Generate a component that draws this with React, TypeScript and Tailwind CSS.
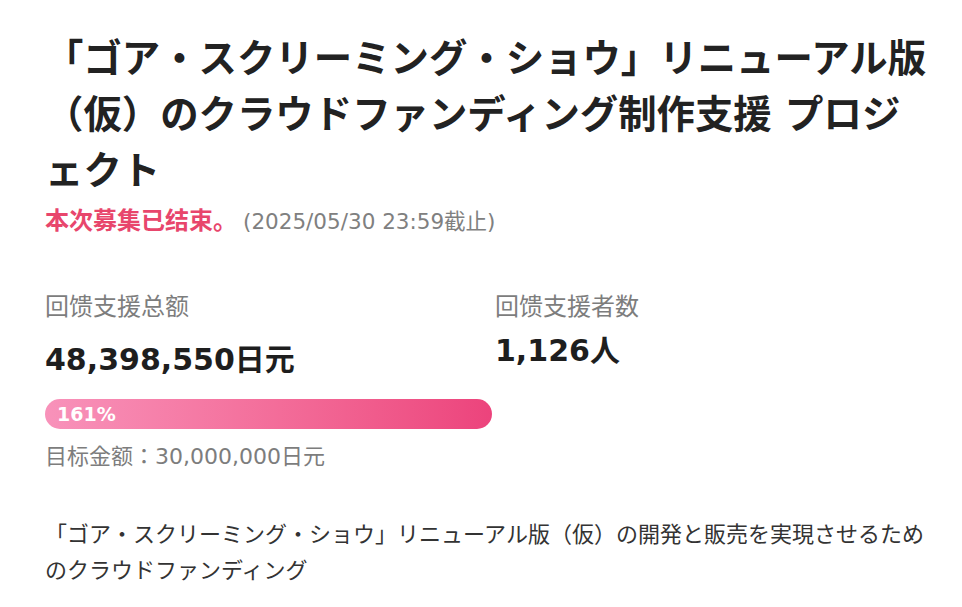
const font = '[font-family:"DejaVu_Sans","Noto_Sans_CJK_JP","Noto_Sans_CJK_SC",sans-serif]'

function Stat({ label, value, children }: { label: string; value: string; children?: React.ReactNode }) {
  return (
    <div className="flex flex-col">
      <div className="text-[24px] leading-[32px] text-[#7d7d7d]">{label}</div>
      {children ? (
        <div className="mt-[17px] text-[30px] font-bold leading-[40px] text-[#1e1e1e]">{value}</div>
      ) : (
        <div className="mt-[8px] text-[30px] font-bold leading-[40px] text-[#1e1e1e]">{value}</div>
      )}
      {children}
    </div>
  )
}

export default function App() {
  return (
    <div className={`min-h-[607px] w-[962px] bg-white pl-[45px] pr-[27px] pt-[31px] ${font}`}>
      {/* Title */}
      <h1 className="text-[38.4px] font-bold leading-[56px] text-[#222] [line-break:normal]">
        「ゴア・スクリーミング・ショウ」リニューアル版（仮）のクラウドファンディング制作支援 プロジェクト
      </h1>

      {/* Status */}
      <div className="mt-[7px] flex items-baseline leading-[30px]">
        <span className="text-[24px] font-bold text-[#e8466c]">本次募集已结束。</span>
        <span className="ml-[6px] text-[21.5px] text-[#808080]">(2025/05/30 23:59截止)</span>
      </div>

      {/* Stats */}
      <div className="mt-[54px] grid grid-cols-2">
        <Stat label="回馈支援总额" value="48,398,550日元">
          <div className="mt-[19px] flex h-[30px] w-[447px] items-center rounded-full bg-gradient-to-r from-[#f892ba] to-[#ec437c] pl-3">
            <span className="text-[19px] font-bold text-white">161%</span>
          </div>
          <div className="mt-[13px] text-[22px] leading-[30px] text-[#7d7d7d]">目标金额：30,000,000日元</div>
        </Stat>
        <div className="pl-[5px]">
          <Stat label="回馈支援者数" value="1,126人" />
        </div>
      </div>

      {/* Description */}
      <p className="mt-[45px] text-[22px] leading-[36px] text-[#333]">
        「ゴア・スクリーミング・ショウ」リニューアル版（仮）の開発と販売を実現させるためのクラウドファンディング
      </p>
    </div>
  )
}
